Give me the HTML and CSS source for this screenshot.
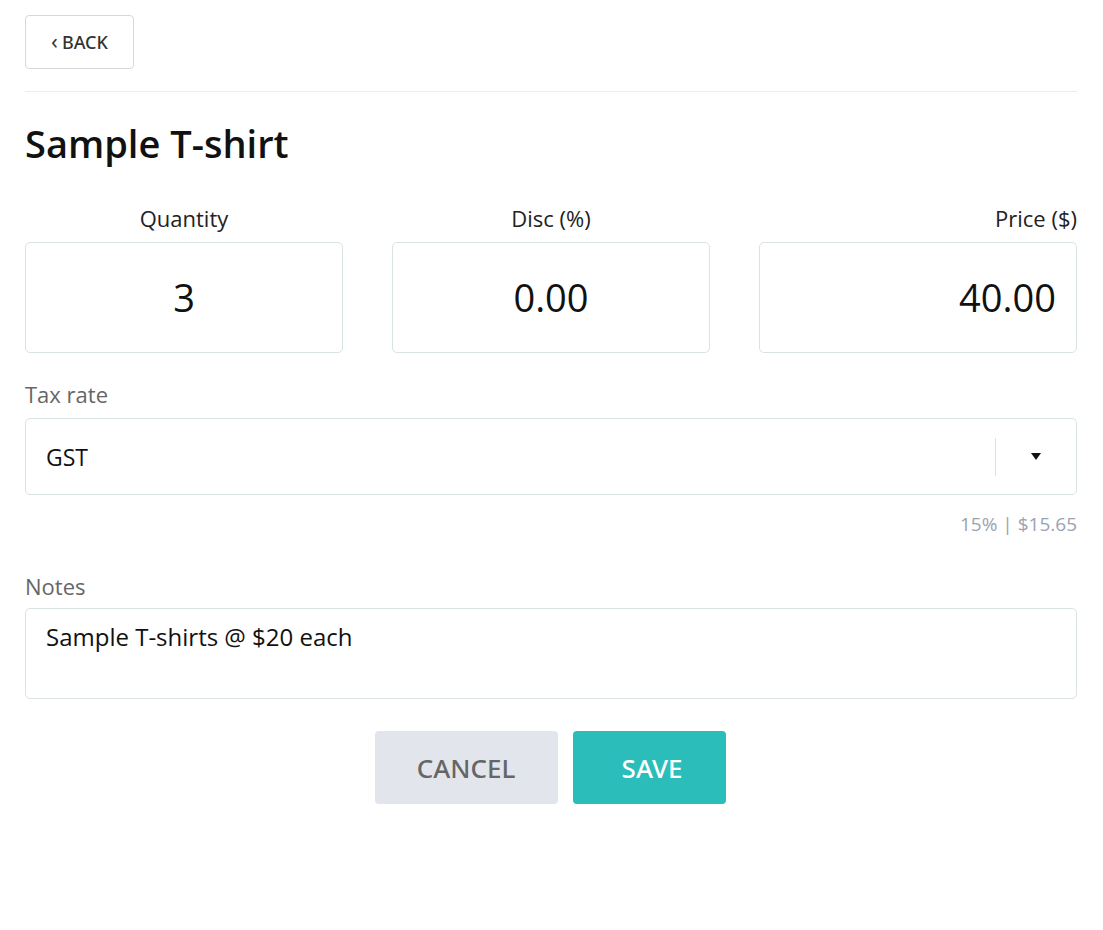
FILE: index.html
```html
<!DOCTYPE html>
<html>
<head>
<meta charset="utf-8">
<link rel="stylesheet" href="styles.css">
</head>
<body>
<div class="page">
  <div class="topbar">
    <button class="back"><span class="chev">&lsaquo;</span>BACK</button>
  </div>
  <hr class="divider">
  <h1 class="title">Sample T-shirt</h1>
  <div class="numbers">
    <div class="field">
      <div class="flabel center">Quantity</div>
      <div class="numbox center">3</div>
    </div>
    <div class="field">
      <div class="flabel center">Disc (%)</div>
      <div class="numbox center">0.00</div>
    </div>
    <div class="field">
      <div class="flabel right">Price ($)</div>
      <div class="numbox right">40.00</div>
    </div>
  </div>
  <div class="label">Tax rate</div>
  <div class="select">
    <span class="select-value">GST</span>
    <span class="select-sep"></span>
    <span class="select-arrow"></span>
  </div>
  <div class="taxinfo">15% | $15.65</div>
  <div class="label notes-label">Notes</div>
  <div class="notes">Sample T-shirts @ $20 each</div>
  <div class="actions">
    <button class="btn cancel">CANCEL</button>
    <button class="btn save">SAVE</button>
  </div>
</div>
</body>
</html>
```
FILE: styles.css
```css
* { box-sizing: border-box; }
html, body { margin: 0; padding: 0; background: #fff; }
body { font-family: "Open Sans", "Noto Sans", sans-serif; color: #111; }
.page { width: 1052px; margin-left: 25px; padding-top: 15px; }
.topbar { display: flex; }
.back {
  width: 109px; height: 54px;
  border: 1px solid #d6d9dc; border-radius: 4px; background: #fff;
  font-family: "Noto Sans", "Open Sans", sans-serif; font-size: 18px; font-weight: 500; color: #333;
  display: flex; align-items: center; justify-content: center; gap: 4px;
  padding: 0; letter-spacing: 0;
}
.back .chev { font-size: 22px; font-weight: 400; line-height: 1; position: relative; top: -2px; }
.divider { border: 0; border-top: 1px solid #ececec; margin: 22px 0 0 0; }
.title { font-size: 38px; font-weight: 600; margin: 0; line-height: 50px; padding-top: 26px; color: #111; }
.numbers { display: grid; grid-template-columns: 1fr 1fr 1fr; column-gap: 49px; margin-top: 35px; }
.flabel { font-size: 22px; line-height: 30px; color: #222; margin-bottom: 9px; }
.center { text-align: center; }
.right { text-align: right; }
.numbox {
  height: 111px; border: 1px solid #d9e3e1; border-radius: 5px;
  font-size: 38px; line-height: 109px; color: #111;
}
.numbox.right { padding-right: 20px; }
.label { font-size: 22px; line-height: 30px; color: #666; margin-top: 26px; margin-bottom: 9px; }
.select {
  height: 77px; border: 1px solid #d9e3e1; border-radius: 5px;
  display: flex; align-items: center; padding-left: 20px;
}
.select-value { font-size: 23px; color: #111; flex: 1; }
.select-sep { width: 1px; height: 38px; background: #d9e3e1; }
.select-arrow {
  width: 0; height: 0; margin: 0 35px 0 35px;
  border-left: 5px solid transparent; border-right: 5px solid transparent; border-top: 7px solid #111;
}
.taxinfo { text-align: right; font-size: 19px; color: #9aa3b2; line-height: 26px; margin-top: 16px; }
.notes-label { margin-top: 34px; margin-bottom: 7px; }
.notes {
  height: 91px; border: 1px solid #d9e3e1; border-radius: 5px;
  font-size: 24px; padding: 13px 20px; line-height: 30px; color: #111;
}
.actions { display: flex; justify-content: center; gap: 15px; margin-top: 32px; padding-right: 2px; }
.btn {
  height: 73px; border: 0; border-radius: 4px; font-family: "Noto Sans", "Open Sans", sans-serif;
  font-size: 26px; font-weight: 500; padding: 0;
}
.cancel { width: 183px; background: #e2e6ec; color: #666; }
.save { width: 153px; background: #2bbdb9; color: #fff; padding-left: 6px; }
```
